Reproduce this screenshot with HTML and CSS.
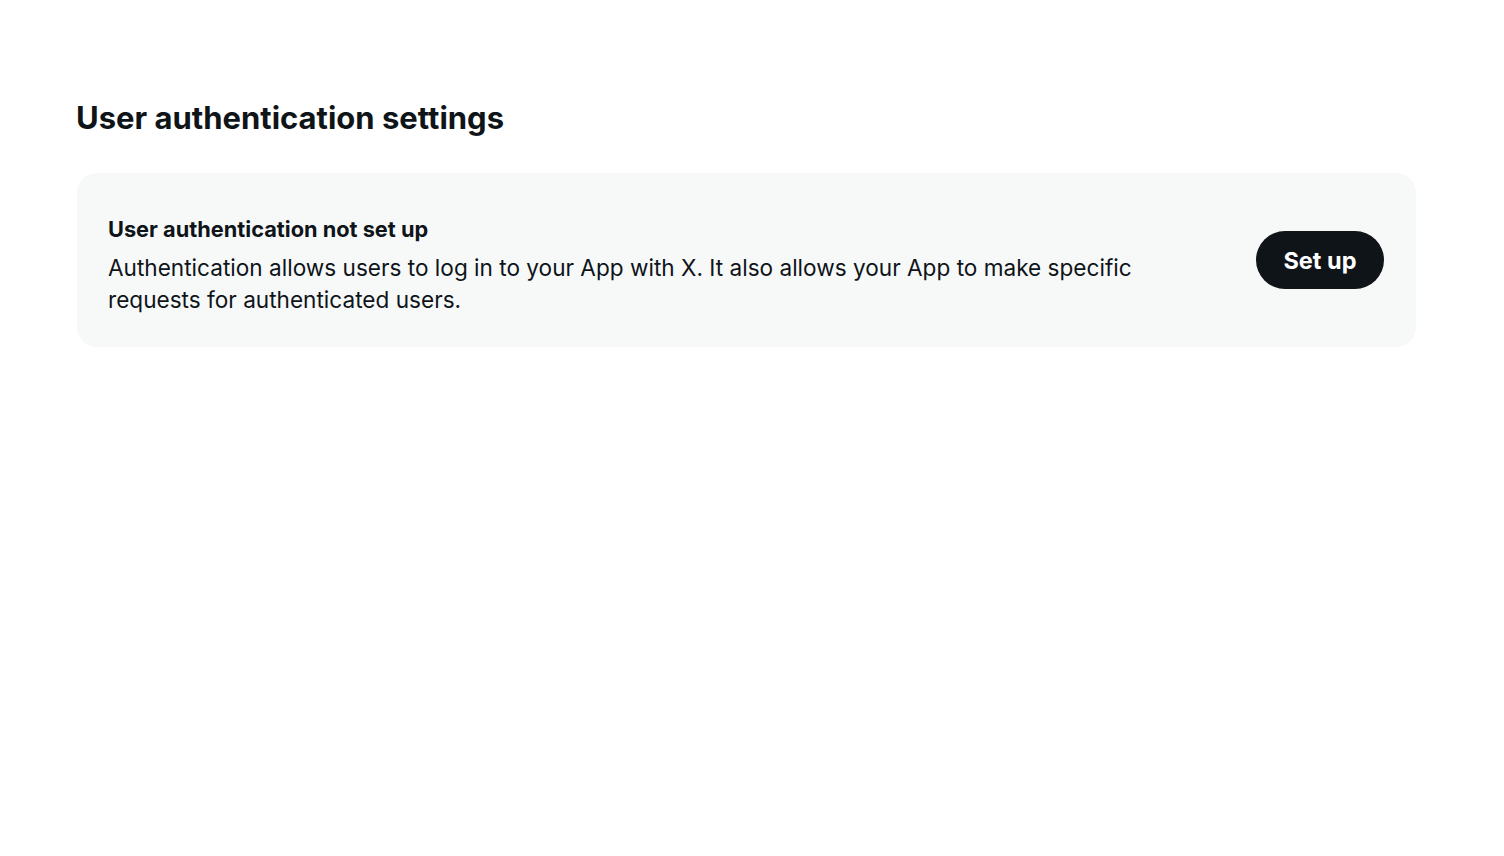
FILE: index.html
```html
<!DOCTYPE html>
<html lang="en">
<head>
<meta charset="utf-8">
<title>User authentication settings</title>
<link rel="stylesheet" href="styles.css">
</head>
<body>
<main class="page">
  <h1 class="page-title">User authentication settings</h1>
  <section class="card">
    <div class="card-text">
      <h2 class="card-title">User authentication not set up</h2>
      <p class="card-desc">Authentication allows users to log in to your App with X. It also allows your App to make specific requests for authenticated users.</p>
    </div>
    <button class="btn-primary" type="button">Set up</button>
  </section>
</main>
</body>
</html>
```

FILE: styles.css
```css
* { box-sizing: border-box; }
html, body { margin: 0; padding: 0; background: #ffffff; }
body {
  font-family: Inter, "Noto Sans", "Liberation Sans", sans-serif;
  color: #0f1419;
}
.page {
  padding: 98px 88px 0 76px;
}
.page-title {
  margin: 0 0 35px 0;
  font-size: 31px;
  line-height: 40px;
  font-weight: 700;
  letter-spacing: 0;
}
.card {
  margin-left: 1px;
  background: #f7f9f9;
  border-radius: 20px;
  padding: 42px 32px 31px 31px;
  display: flex;
  align-items: center;
  justify-content: space-between;
  gap: 40px;
}
.card-text { max-width: 1060px; }
.card-title {
  margin: 0 0 9px 0;
  font-size: 21.75px;
  line-height: 28px;
  font-weight: 700;
}
.card-desc {
  margin: 0;
  font-size: 22.6px;
  line-height: 32px;
  font-weight: 400;
}
.btn-primary {
  flex: none;
  width: 128px;
  height: 58px;
  border: none;
  border-radius: 29px;
  background: #0f1419;
  color: #ffffff;
  font-family: inherit;
  font-size: 23.5px;
  font-weight: 700;
  cursor: pointer;
  margin-bottom: 11px;
}
```
